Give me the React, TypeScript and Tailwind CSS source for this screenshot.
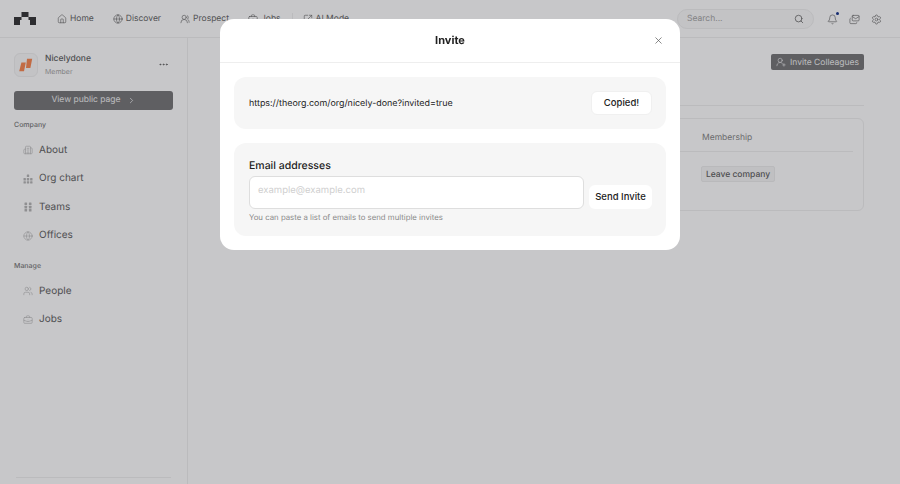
import { Bell, BriefcaseBusiness, Building2, ChevronRight, Ellipsis, Globe, House, Search, Settings, UserRoundPlus, Users, UsersRound, X, Mails, SquareArrowOutUpRight } from 'lucide-react'
import type { ComponentType } from 'react'

type IconProps = { size?: number; strokeWidth?: number; className?: string }

function OrgIcon({ className }: IconProps) {
  return (
    <svg width="10" height="10" viewBox="0 0 10 10" fill="currentColor" className={className}>
      <rect x="3.8" y="0.5" width="2.4" height="2.4" rx="0.5" />
      <rect x="0.5" y="4" width="2.4" height="2.4" rx="0.5" />
      <rect x="3.8" y="4" width="2.4" height="2.4" rx="0.5" />
      <rect x="7.1" y="4" width="2.4" height="2.4" rx="0.5" />
      <rect x="0.5" y="7.3" width="2.4" height="2.2" rx="0.5" />
      <rect x="3.8" y="7.3" width="2.4" height="2.2" rx="0.5" />
      <rect x="7.1" y="7.3" width="2.4" height="2.2" rx="0.5" />
    </svg>
  )
}

function TeamsIcon({ className }: IconProps) {
  return (
    <svg width="10" height="10" viewBox="0 0 10 10" fill="currentColor" className={className}>
      <rect x="1.5" y="0.5" width="2.6" height="2.6" rx="0.5" />
      <rect x="5.9" y="0.5" width="2.6" height="2.6" rx="0.5" />
      <rect x="1.5" y="3.8" width="2.6" height="2.6" rx="0.5" />
      <rect x="5.9" y="3.8" width="2.6" height="2.6" rx="0.5" />
      <rect x="1.5" y="7" width="2.6" height="2.6" rx="0.5" />
      <rect x="5.9" y="7" width="2.6" height="2.6" rx="0.5" />
    </svg>
  )
}

const navItems = [
  { label: 'Home', icon: House },
  { label: 'Discover', icon: Globe },
  { label: 'Prospect', icon: UsersRound },
  { label: 'Jobs', icon: BriefcaseBusiness },
]

const companyLinks = [
  { label: 'About', icon: Building2 },
  { label: 'Org chart', icon: OrgIcon },
  { label: 'Teams', icon: TeamsIcon },
  { label: 'Offices', icon: Globe },
]

const manageLinks = [
  { label: 'People', icon: Users },
  { label: 'Jobs', icon: BriefcaseBusiness },
]

function Logo() {
  return (
    <svg width="22" height="13" viewBox="0 0 22 13" fill="#3a3a3c" className="-mt-[1px]">
      <rect x="7.5" y="0" width="7" height="5" />
      <path d="M0 5h7.5v3H6v5H0zM14.5 5H22v8h-6V8h-1.5z" />
    </svg>
  )
}

function SideLink({ label, icon: Icon }: { label: string; icon: ComponentType<IconProps> }) {
  return (
    <div className="flex h-[28.5px] items-center gap-[6px] pl-[9px]">
      <span className="flex w-[10px] justify-center">
        <Icon size={10} strokeWidth={1.5} className="text-[#b8b8b8]" />
      </span>
      <span className="text-[10px] text-[#666666]">{label}</span>
    </div>
  )
}

export default function App() {
  return (
    <div className="relative h-[484px] w-[900px] overflow-hidden bg-white font-['Inter',sans-serif] [text-rendering:geometricPrecision]">
      <header className="flex h-[38px] items-center border-b border-[#f0f0f0] pl-[14px] pr-[18px] pt-[1px]">
        <Logo />
        <nav className="ml-[21px] flex items-center gap-[19px]">
          {navItems.map((item) => (
            <div key={item.label} className="flex items-center gap-[3px] text-[8.5px] text-[#6a6a6a]">
              <item.icon size={10} strokeWidth={1.5} />
              {item.label}
            </div>
          ))}
          <div className="-ml-[8px] flex items-center gap-[3px] border-l border-[#f0f0f0] pl-[10px] text-[8.5px] text-[#6a6a6a]">
            <SquareArrowOutUpRight size={10} strokeWidth={1.5} />
            AI Mode
          </div>
        </nav>
        <div className="ml-auto flex h-[20px] w-[137px] items-center justify-between rounded-full border border-[#f0f0f0] bg-[#fafafa] px-[9px] text-[8.5px] text-[#a8a8a8]">
          Search...
          <Search size={10} className="text-[#707070]" />
        </div>
        <div className="ml-[13px] flex items-center gap-[11px] text-[#707070]">
          <div className="relative">
            <Bell size={11} strokeWidth={1.5} />
            <span className="absolute -right-[1px] -top-[2px] h-[3px] w-[3px] rounded-full bg-blue-900" />
          </div>
          <Mails size={11} strokeWidth={1.5} />
          <Settings size={11} strokeWidth={1.5} />
        </div>
      </header>

      <div className="flex h-[446px]">
        <aside className="relative flex w-[188px] shrink-0 flex-col border-r border-[#f0f0f0] px-[14px]">
          <div className="mt-[14px] flex h-[25px] items-center gap-[7px]">
            <div className="flex h-[24px] w-[24px] items-center justify-center rounded-md border border-[#f0f0f0] bg-[#fafafa]">
              <svg width="16" height="14" viewBox="0 0 16 14" fill="#f98a55">
                <path d="M3.4 4.5h4.4L6 13.2H1.2zM9 0.8h5.2L12.4 10H8z" />
              </svg>
            </div>
            <div className="flex-1 pt-[2px]">
              <div className="text-[8.5px] font-medium leading-[13px] text-[#666666]">Nicelydone</div>
              <div className="text-[7px] leading-[12px] text-[#a8a8a8]">Member</div>
            </div>
            <Ellipsis size={11} className="mr-[4px] text-[#666666]" />
          </div>
          <div className="mt-[14px] flex h-[19px] items-center justify-center gap-[4px] rounded-[3px] bg-[#7a7a7c] text-[8.5px] text-[#f0f0f0]">
            View public page
            <ChevronRight size={9} className="ml-[2px]" />
          </div>
          <div className="mt-[10px] mb-[6px] text-[7px] font-medium leading-[10px] text-[#808080]">Company</div>
          {companyLinks.map((link) => (
            <SideLink key={link.label} {...link} />
          ))}
          <div className="mt-[11px] mb-[6px] text-[7px] font-medium leading-[10px] text-[#808080]">Manage</div>
          {manageLinks.map((link) => (
            <SideLink key={link.label} {...link} />
          ))}
          <div className="mx-[2px] mt-auto mb-[6px] border-t border-[#f0f0f0]" />
        </aside>

        <main className="flex-1 pr-[36px] pl-[33px]">
          <div className="mt-[16px] flex justify-end">
            <div className="flex h-[16px] items-center gap-[4px] rounded-[2px] bg-[#7a7a7c] pl-[5px] pr-[5px] pt-[2px] text-[8.5px] text-[#f0f0f0]">
              <UserRoundPlus size={10} strokeWidth={1.5} className="-mt-[2px]" />
              Invite Colleagues
            </div>
          </div>
          <div className="mt-[35px] border-b border-[#f0f0f0]" />
          <div className="mt-[12px] h-[93px] rounded-md border border-[#f0f0f0] px-[10px]">
            <div className="flex h-[33px] items-center border-b border-[#f0f0f0] pl-[470px] pt-[7px] text-[8.5px] text-[#8a8a8a]">
              Membership
            </div>
            <div className="mt-[14px] flex pl-[469px]">
              <span className="flex h-[16px] w-[74px] items-center justify-center rounded-[2px] border border-[#eeeeee] bg-[#f6f6f6] pt-[2px] text-[8.5px] font-medium text-[#666666]">
                Leave company
              </span>
            </div>
          </div>
        </main>
      </div>

      {/* dim layer + modal */}
      <div className="absolute inset-0 bg-[#00000a]/[0.22] backdrop-blur-[0.4px]" />
      <div className="absolute left-[220px] top-[19px] h-[231px] w-[460px] rounded-[14px] bg-white">
        <div className="relative flex h-[44px] items-center justify-center border-b border-[#eeeeee]">
          <span className="text-[11px] font-bold text-[#222222]">Invite</span>
          <X size={11} strokeWidth={1.5} className="absolute right-[16px] top-[16px] text-[#555555]" />
        </div>
        <div className="flex flex-col gap-[14px] px-[14px] pt-[14px]">
          <div className="flex h-[52px] items-center justify-between rounded-xl bg-[#f6f6f6] pl-[15px] pr-[14px]">
            <span className="pt-[2px] text-[8.92px] text-[#222222]">https://theorg.com/org/nicely-done?invited=true</span>
            <button className="h-[24px] w-[61px] rounded-md border border-[#f0f0f0] bg-white text-[9.5px] font-medium text-[#222222]">
              Copied!
            </button>
          </div>
          <div className="flex h-[93px] flex-col rounded-xl bg-[#f6f6f6] pl-[15px] pr-[14px] pt-[15px]">
            <div className="text-[10.5px] font-medium leading-[15px] text-[#222222]">Email addresses</div>
            <div className="mt-[3px] flex items-end gap-[5px]">
              <div className="flex h-[33px] flex-1 items-start rounded-md border-[1.5px] border-[#dedede] bg-white px-[8px] pt-[7px] text-[9.5px] text-[#cfcfcf]">
                example@example.com
              </div>
              <button className="h-[24px] w-[63px] rounded-md bg-white text-[9.5px] font-medium text-[#222222]">
                Send Invite
              </button>
            </div>
            <div className="mt-[3px] text-[7.8px] text-[#8a8a8a]">You can paste a list of emails to send multiple invites</div>
          </div>
        </div>
      </div>
    </div>
  )
}
